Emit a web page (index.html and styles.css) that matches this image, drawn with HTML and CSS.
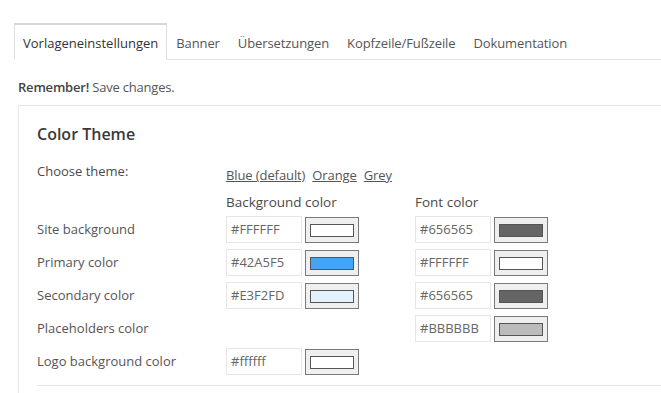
FILE: index.html
```html
<!DOCTYPE html>
<html>
  <head>
    <title>Vorlageneinstellungen</title>
    <link rel="stylesheet" href="styles.css">
  </head>
  <body>
    <div class="page">
      <ul class="tabs">
        <li class="tab active">Vorlageneinstellungen</li>
        <li class="tab">Banner</li>
        <li class="tab">Übersetzungen</li>
        <li class="tab">Kopfzeile/Fußzeile</li>
        <li class="tab">Dokumentation</li>
        <li class="tab-rest"></li>
      </ul>

      <p class="notice"><strong>Remember!</strong> Save changes.</p>

      <div class="panel">
        <h2>Color Theme</h2>

        <div class="theme-choice">
          <div class="label strong">Choose theme:</div>
          <div class="theme-links">
            <a href="#">Blue (default)</a>
            <a href="#">Orange</a>
            <a href="#">Grey</a>
          </div>
        </div>

        <div class="color-grid">
          <div></div>
          <div class="col-title">Background color</div>
          <div class="col-title">Font color</div>
        </div>

        <div class="color-grid row">
          <div class="label">Site background</div>
          <div class="field"><span class="hex">#FFFFFF</span><span class="swatch"><span class="fill" style="background:#FFFFFF"></span></span></div>
          <div class="field"><span class="hex">#656565</span><span class="swatch"><span class="fill" style="background:#656565"></span></span></div>
        </div>

        <div class="color-grid row">
          <div class="label">Primary color</div>
          <div class="field"><span class="hex">#42A5F5</span><span class="swatch"><span class="fill" style="background:#42A5F5"></span></span></div>
          <div class="field"><span class="hex">#FFFFFF</span><span class="swatch"><span class="fill" style="background:#FFFFFF"></span></span></div>
        </div>

        <div class="color-grid row">
          <div class="label">Secondary color</div>
          <div class="field"><span class="hex">#E3F2FD</span><span class="swatch"><span class="fill" style="background:#E3F2FD"></span></span></div>
          <div class="field"><span class="hex">#656565</span><span class="swatch"><span class="fill" style="background:#656565"></span></span></div>
        </div>

        <div class="color-grid row">
          <div class="label">Placeholders color</div>
          <div></div>
          <div class="field"><span class="hex">#BBBBBB</span><span class="swatch"><span class="fill" style="background:#BBBBBB"></span></span></div>
        </div>

        <div class="color-grid row">
          <div class="label">Logo background color</div>
          <div class="field"><span class="hex">#ffffff</span><span class="swatch"><span class="fill" style="background:#ffffff"></span></span></div>
          <div></div>
        </div>

        <hr class="divider">
      </div>
    </div>
  </body>
</html>
```

FILE: styles.css
```css
html {
  overflow: hidden;
}

body {
  margin: 0;
  font-family: "Open Sans", Arial, sans-serif;
  font-size: 13px;
  color: #555;
  background: #fff;
}

.page {
  width: 760px;
  padding: 23px 0 0 18px;
}

.tabs {
  display: flex;
  margin: 0 0 0 -4px;
  padding: 0;
  list-style: none;
}

.tab {
  padding: 8px 9px 0;
  height: 26px;
  line-height: 20px;
  border-bottom: 1px solid #e3e3e3;
  border-top: 2px solid transparent;
  color: #555;
  letter-spacing: -0.1px;
}

.tab.active {
  border: 1px solid #dedede;
  border-top: 2px solid #d6d6d6;
  border-bottom: 1px solid #fff;
  padding: 8px 8px 0;
  color: #333;
  letter-spacing: 0;
}

.tab-rest {
  flex: 1;
  border-bottom: 1px solid #e3e3e3;
}

.notice {
  margin: 17px 0 0;
  line-height: 20px;
  color: #555;
  letter-spacing: -0.2px;
}

.notice strong {
  font-weight: 600;
  color: #444;
}

.panel {
  margin-top: 8px;
  border: 1px solid #e6e6e6;
  padding: 17px 0 0 18px;
  height: 320px;
}

.panel h2 {
  margin: 0;
  font-size: 16px;
  font-weight: 600;
  line-height: 22px;
  color: #3a3a3a;
}

.theme-choice {
  display: grid;
  grid-template-columns: 189px 1fr;
  margin-top: 16px;
}

.label {
  line-height: 20px;
  color: #555;
}

.label.strong {
  color: #4a4a4a;
}

.theme-links {
  display: flex;
  gap: 7px;
  margin-top: 4px;
  line-height: 20px;
  letter-spacing: -0.1px;
}

.theme-links a {
  color: #555;
}

.color-grid {
  display: grid;
  grid-template-columns: 189px 189px 1fr;
  align-items: center;
}

.col-title {
  margin-top: 7px;
  line-height: 20px;
  font-size: 13.5px;
  color: #4a4a4a;
}

.row {
  height: 33px;
}

.field {
  display: flex;
  align-items: center;
  gap: 3px;
  padding-top: 2px;
}

.hex {
  box-sizing: border-box;
  width: 76px;
  height: 27px;
  border: 1px solid #e6e6e6;
  padding: 0 4px;
  line-height: 25px;
  color: #666;
}

.swatch {
  box-sizing: border-box;
  width: 54px;
  height: 26px;
  border: 1px solid #7a7a7a;
  background: #efefef;
  padding: 6px 4px 5px 4px;
  display: flex;
}

.fill {
  flex: 1;
  border: 1px solid #555;
}

.divider {
  margin: 8px 0 0;
  border: none;
  border-top: 1px solid #e6e6e6;
}
```
